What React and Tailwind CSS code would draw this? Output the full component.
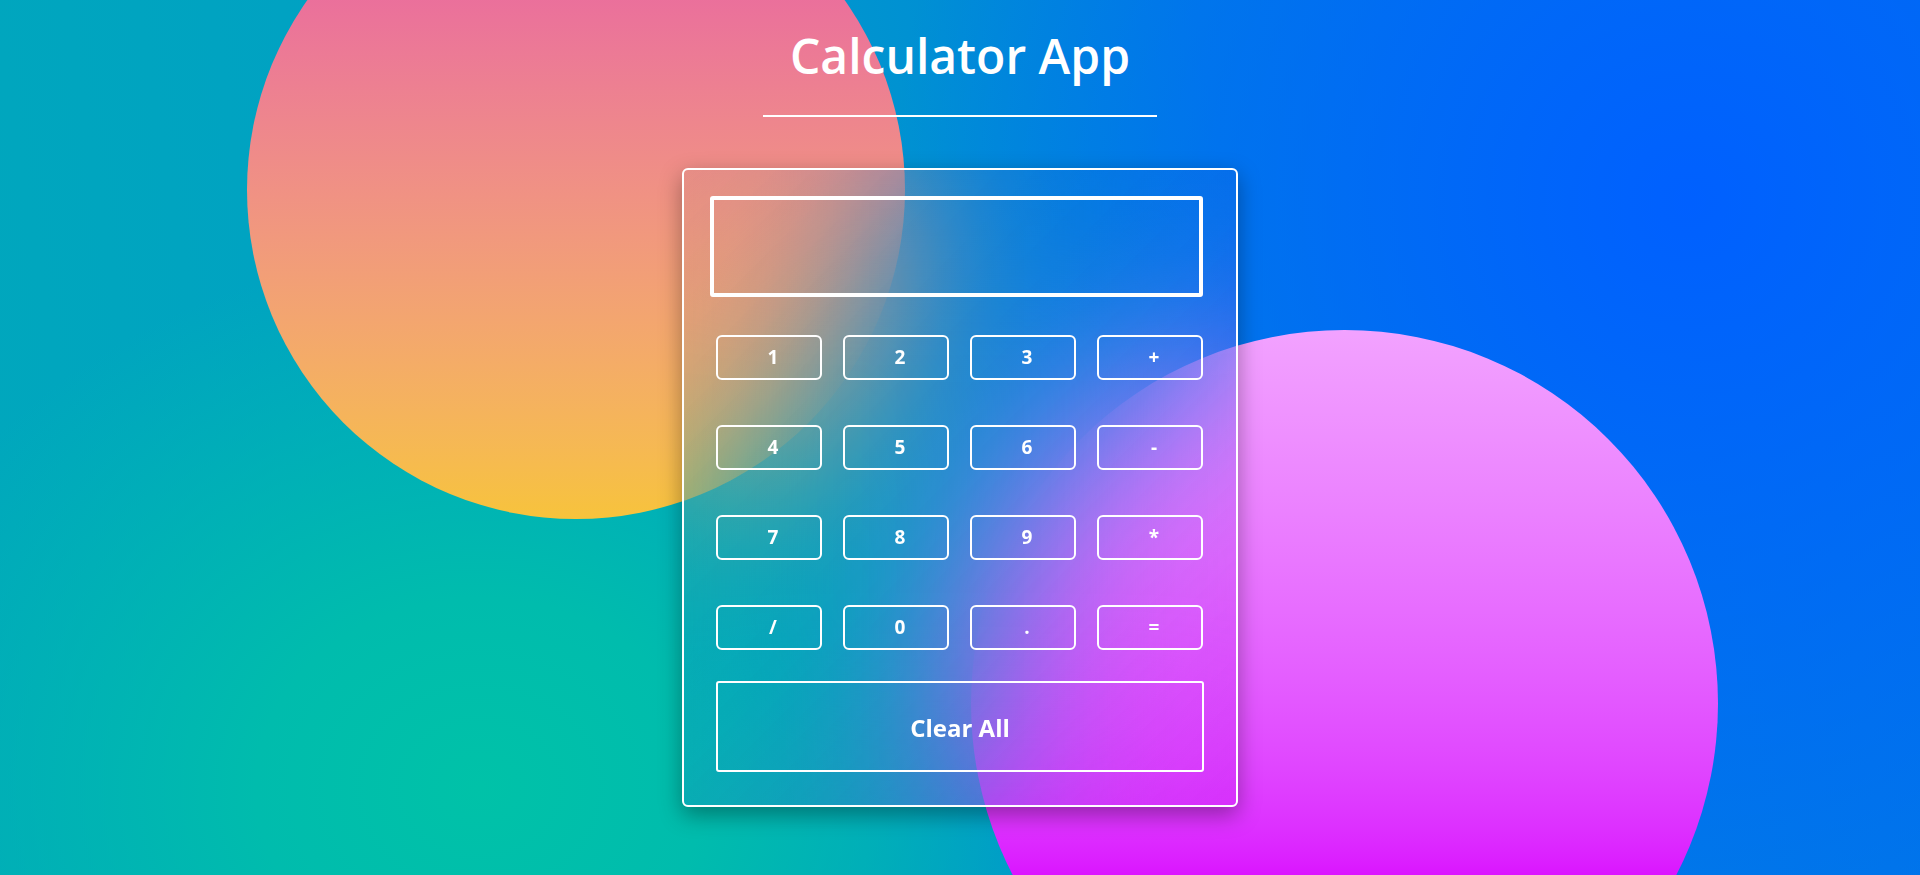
import { useState } from "react";

const keys = ["1", "2", "3", "+", "4", "5", "6", "-", "7", "8", "9", "*", "/", "0", ".", "="];

export default function App() {
  const [value, setValue] = useState("");

  const press = (k) => {
    if (k === "=") {
      try {
        // eslint-disable-next-line no-new-func
        setValue(String(Function(`return (${value})`)()));
      } catch {
        setValue("Error");
      }
      return;
    }
    setValue((v) => (v === "Error" ? k : v + k));
  };

  return (
    <div className="relative h-[875px] w-full overflow-hidden font-['Open_Sans',sans-serif] bg-[radial-gradient(ellipse_640px_540px_at_25%_90%,#00c2a8_0%,#00bcad_35%,rgba(0,188,173,0)_100%),radial-gradient(circle_at_88%_23%,#0060ff_0px,rgba(0,96,255,0)_800px),linear-gradient(80deg,#00a8bc_0%,#009cc8_42%,#0080e2_65%,#0074ea_100%)]">
      {/* background blobs */}
      <div className="absolute left-[247px] top-[-139px] h-[658px] w-[658px] rounded-full bg-linear-to-b from-[#e653a9] to-[#f7c33b]" />
      <div className="absolute left-[971px] top-[330px] h-[747px] w-[747px] rounded-full bg-linear-to-b from-[#f2a2ff] to-[#da00ff] to-75%" />

      <div className="relative flex flex-col items-center">
        <h1 className="mt-[32px] text-[48px] leading-none font-semibold text-white">
          Calculator App
        </h1>
        <div className="mt-[35px] h-[2px] w-[394px] bg-white" />

        {/* Calculator */}
        <div className="mt-[51px] w-[556px] rounded-[6px] border-2 border-white bg-[linear-gradient(135deg,rgba(40,60,200,0.04)_0%,rgba(60,70,230,0.1)_50%,rgba(190,0,240,0.22)_100%)] pl-[26px] pr-[33px] pt-[26px] pb-[33px] backdrop-blur-[90px] shadow-[0_8px_22px_rgba(0,0,0,0.35)]">
          <div className="flex h-[101px] w-full items-center justify-end overflow-hidden rounded-[3px] border-4 border-white px-4 text-[40px] font-semibold text-white">
            {value}
          </div>

          <div className="ml-[6px] mt-[38px] grid w-[487px] grid-cols-4 gap-x-[21px] gap-y-[45px]">
            {keys.map((k) => (
              <button
                key={k}
                onClick={() => press(k)}
                className="flex h-[45px] items-center justify-center rounded-[6px] border-2 border-white pl-[8px] text-[19px] font-bold text-white"
              >
                {k}
              </button>
            ))}
          </div>

          <button
            onClick={() => setValue("")}
            className="ml-[6px] mt-[31px] flex h-[91px] w-[488px] items-center justify-center rounded-[3px] border-2 border-white pt-[3px] text-[24px] font-bold text-white"
          >
            Clear All
          </button>
        </div>
      </div>
    </div>
  );
}
